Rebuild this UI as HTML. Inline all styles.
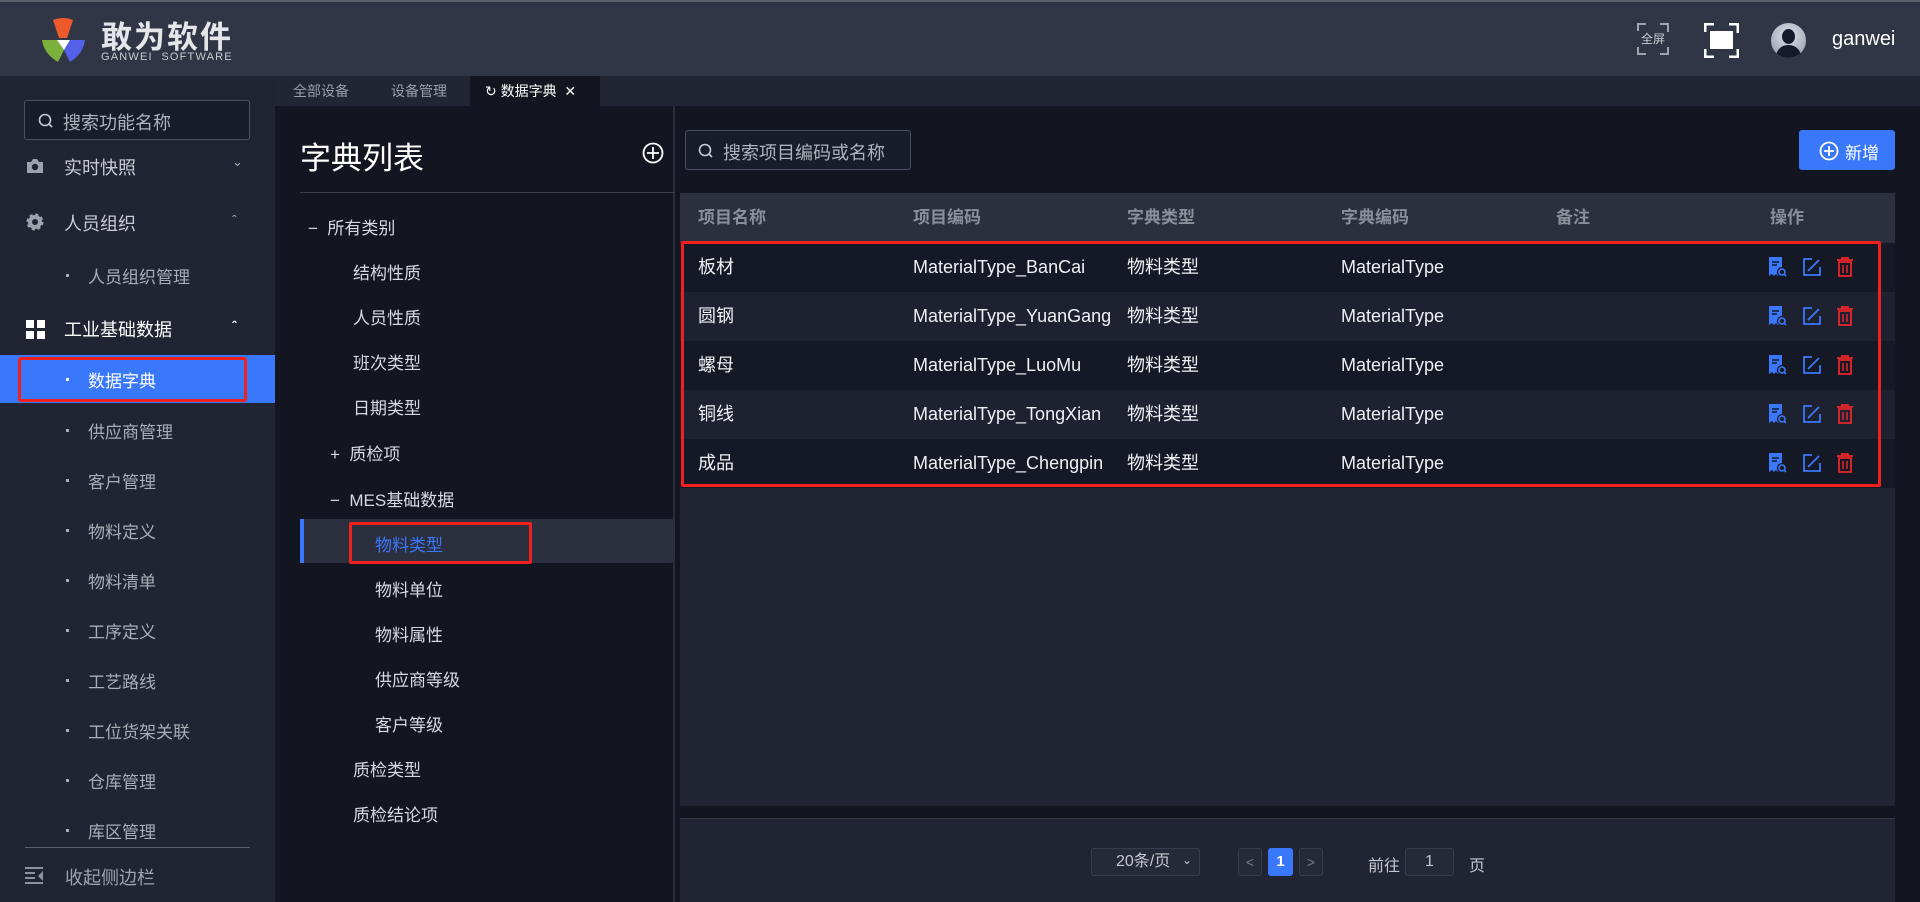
<!DOCTYPE html>
<html><head><meta charset="utf-8"><style>
*{margin:0;padding:0;box-sizing:border-box}
body{width:1920px;height:902px;overflow:hidden;background:#131620;font-family:"Liberation Sans","Noto Sans CJK SC",sans-serif;color:#e6e8ee;position:relative}
.a{position:absolute}
.hdr{left:0;top:0;width:1920px;height:76px;background:#313646;border-top:2px solid #5a5f6b}
.side{left:0;top:76px;width:275px;height:826px;background:#212533}
.mi{position:absolute;left:0;width:275px;font-size:18px;color:#c8cbd2}
.sub{left:88px;font-size:17px;color:#a9adb6}
.dot{position:absolute;left:66px;width:3px;height:3px;background:#a9adb6}
.tabs{left:275px;top:76px;width:1645px;height:30px;background:#222634}
.tab{position:absolute;top:0;height:30px;line-height:30px;font-size:14px;color:#9a9ea8}
.mid{left:275px;top:106px;width:400px;height:796px;background:#131620;border-right:2px solid #2a2e3b}
.tr{position:absolute;font-size:17px;color:#d6d9e0}
.right{left:675px;top:106px;width:1245px;height:796px;background:#131620}
.th{position:absolute;top:0;font-size:17px;font-weight:bold;color:#8a8f99;line-height:50px}
.row{position:absolute;left:0;width:1215px;height:49px;font-size:18px;line-height:49px;color:#eef0f4}
.row span{position:absolute;top:0}
</style></head><body>
<div class="a hdr">
 <svg class="a" style="left:40px;top:16px" width="46" height="46" viewBox="0 0 46 46"><path d="M13 2q10-4 20 0l-6 18h-8z" fill="#ef5a2c"/><path d="M2 22h15l7 10-6 12q-14-8-16-22z" fill="#7bb03b"/><path d="M30 22h15q-2 14-15 22l-6-12z" fill="#5560e8"/><path d="M17 22h13l-6 10z" fill="#fff"/></svg>
 <div class="a" style="left:101px;top:10px;font-size:31px;font-weight:bold;color:#e4e6ea;letter-spacing:2px">敢为软件</div>
 <div class="a" style="left:101px;top:49px;font-size:11px;color:#c8cad0;letter-spacing:1.2px">GANWEI&nbsp; SOFTWARE</div>
 <div class="a" style="left:1637px;top:21px;width:32px;height:32px;font-size:12px;line-height:32px;text-align:center;color:#c7cad2">全屏</div>
 <svg class="a" style="left:1637px;top:21px" width="32" height="32"><path d="M1 8V1h8M23 1h8v8M31 24v7h-8M9 31H1v-7" stroke="#9ea3ae" stroke-width="2" fill="none"/></svg>
 <svg class="a" style="left:1704px;top:21px" width="35" height="35"><path d="M1 9V1h9M25 1h9v9M34 26v8h-9M10 34H1v-8" stroke="#fff" stroke-width="3" fill="none"/><rect x="6" y="8" width="23" height="18" fill="#fff"/></svg>
 <div class="a" style="left:1771px;top:21px;width:35px;height:35px;border-radius:50%;background:radial-gradient(circle at 50% 35%,#dfe3ea,#8a93a6);overflow:hidden"><div class="a" style="left:11px;top:6px;width:13px;height:15px;border-radius:50%;background:#141a2c"></div><div class="a" style="left:5px;top:22px;width:25px;height:16px;border-radius:12px 12px 0 0;background:#141a2c"></div></div>
 <div class="a" style="left:1832px;top:26px;font-size:20px;color:#fff">ganwei</div>
</div>
<div class="a side">
 <div class="a" style="left:24px;top:24px;width:226px;height:40px;border:1px solid #4a5062;border-radius:3px;background:#191d29"></div>
 <svg class="a" style="left:38px;top:37px" width="16" height="16"><circle cx="7" cy="7" r="5.5" stroke="#c8cbd2" stroke-width="1.6" fill="none"/><path d="M11 11l3 3" stroke="#c8cbd2" stroke-width="1.6"/></svg>
 <div class="a" style="left:63px;top:33px;font-size:18px;color:#aeb2bb">搜索功能名称</div>
 <div class="mi" style="top:78px"><svg class="a" style="left:26px;top:4px" width="18" height="16"><path d="M1 4h4l2-3h4l2 3h4v11H1z" fill="#9ea2ac"/><circle cx="9" cy="9" r="3.2" fill="#212533"/></svg><span class="a" style="left:64px">实时快照</span><span class="a" style="left:232px;font-size:13px;color:#aaa">&#8964;</span></div>
 <div class="mi" style="top:134px"><svg class="a" style="left:26px;top:3px" width="18" height="18"><circle cx="9" cy="9" r="7" fill="#9ea2ac" stroke="#9ea2ac" stroke-width="3" stroke-dasharray="3 2.5"/><circle cx="9" cy="9" r="3" fill="#212533"/></svg><span class="a" style="left:64px">人员组织</span><span class="a" style="left:232px;top:2px;font-size:14px;color:#aaa">&#710;</span></div>
 <div class="dot" style="top:198px"></div><div class="mi sub" style="top:187px">人员组织管理</div>
 <div class="mi" style="top:240px;color:#fff"><svg class="a" style="left:26px;top:4px" width="19" height="19"><rect x="0" y="0" width="8" height="8" fill="#fff"/><rect x="11" y="0" width="8" height="8" fill="#fff"/><rect x="0" y="11" width="8" height="8" fill="#fff"/><rect x="11" y="11" width="8" height="8" fill="#fff"/></svg><span class="a" style="left:64px">工业基础数据</span><span class="a" style="left:232px;top:2px;font-size:14px;font-weight:bold">&#710;</span></div>
 <div class="a" style="left:0;top:279px;width:275px;height:48px;background:#3a78fb"></div>
 <div class="a" style="left:18px;top:281px;width:229px;height:45px;border:3px solid #f0211c;border-radius:3px"></div>
 <div class="dot" style="top:302px;background:#fff"></div><div class="mi sub" style="top:291px;color:#fff">数据字典</div>
 <div class="dot" style="top:353px"></div><div class="mi sub" style="top:342px">供应商管理</div>
 <div class="dot" style="top:403px"></div><div class="mi sub" style="top:392px">客户管理</div>
 <div class="dot" style="top:453px"></div><div class="mi sub" style="top:442px">物料定义</div>
 <div class="dot" style="top:503px"></div><div class="mi sub" style="top:492px">物料清单</div>
 <div class="dot" style="top:553px"></div><div class="mi sub" style="top:542px">工序定义</div>
 <div class="dot" style="top:603px"></div><div class="mi sub" style="top:592px">工艺路线</div>
 <div class="dot" style="top:653px"></div><div class="mi sub" style="top:642px">工位货架关联</div>
 <div class="dot" style="top:703px"></div><div class="mi sub" style="top:692px">仓库管理</div>
 <div class="dot" style="top:753px"></div><div class="mi sub" style="top:742px">库区管理</div>
 <div class="a" style="left:25px;top:771px;width:225px;height:1px;background:#5a6070"></div>
 <svg class="a" style="left:25px;top:791px" width="19" height="18"><path d="M0 1h18M0 6h10M0 11h10M0 16h18" stroke="#8d93a0" stroke-width="2"/><path d="M18 4v10l-5-5z" fill="#8d93a0"/></svg>
 <div class="mi" style="top:788px;left:65px;color:#9ea2ac;font-size:18px">收起侧边栏</div>
</div>
<div class="a tabs">
 <div class="tab" style="left:18px">全部设备</div>
 <div class="tab" style="left:116px">设备管理</div>
 <div class="a" style="left:195px;top:0;width:130px;height:30px;background:#131620"></div>
 <div class="tab" style="left:210px;color:#fff">&#8635; 数据字典 &nbsp;✕</div>
</div>
<div class="a mid">
 <div class="a" style="left:25px;top:27px;font-size:31px;color:#fff">字典列表</div>
 <svg class="a" style="left:367px;top:36px" width="22" height="22"><circle cx="11" cy="11" r="9.5" stroke="#fff" stroke-width="1.8" fill="none"/><path d="M11 5v12M5 11h12" stroke="#fff" stroke-width="1.8"/></svg>
 <div class="a" style="left:25px;top:86px;width:375px;height:1px;background:#3a3f4c"></div>
 <div class="tr" style="left:33px;top:108px">−&nbsp; 所有类别</div>
 <div class="tr" style="left:78px;top:153px">结构性质</div>
 <div class="tr" style="left:78px;top:198px">人员性质</div>
 <div class="tr" style="left:78px;top:243px">班次类型</div>
 <div class="tr" style="left:78px;top:288px">日期类型</div>
 <div class="tr" style="left:55px;top:334px">+&nbsp; 质检项</div>
 <div class="tr" style="left:55px;top:380px">−&nbsp; MES基础数据</div>
 <div class="a" style="left:25px;top:413px;width:375px;height:44px;background:#2b2f3e;border-radius:0 4px 4px 0"></div>
 <div class="a" style="left:25px;top:413px;width:4px;height:44px;background:#3a78fb"></div>
 <div class="a" style="left:74px;top:416px;width:183px;height:42px;border:3px solid #f0211c;border-radius:2px"></div>
 <div class="tr" style="left:100px;top:425px;color:#3a78fb">物料类型</div>
 <div class="tr" style="left:100px;top:470px">物料单位</div>
 <div class="tr" style="left:100px;top:515px">物料属性</div>
 <div class="tr" style="left:100px;top:560px">供应商等级</div>
 <div class="tr" style="left:100px;top:605px">客户等级</div>
 <div class="tr" style="left:78px;top:650px">质检类型</div>
 <div class="tr" style="left:78px;top:695px">质检结论项</div>
</div>
<div class="a right">
 <div class="a" style="left:10px;top:24px;width:226px;height:40px;border:1px solid #4a5062;border-radius:3px;background:#191d29"></div>
 <svg class="a" style="left:23px;top:37px" width="16" height="16"><circle cx="7" cy="7" r="5.5" stroke="#c8cbd2" stroke-width="1.6" fill="none"/><path d="M11 11l3 3" stroke="#c8cbd2" stroke-width="1.6"/></svg>
 <div class="a" style="left:48px;top:33px;font-size:18px;color:#aeb2bb;width:178px;overflow:hidden;white-space:nowrap">搜索项目编码或名称</div>
 <div class="a" style="left:1124px;top:24px;width:96px;height:40px;background:#3a78fb;border-radius:3px"></div>
 <svg class="a" style="left:1144px;top:35px" width="20" height="20"><circle cx="10" cy="10" r="8.5" stroke="#fff" stroke-width="1.8" fill="none"/><path d="M10 5v10M5 10h10" stroke="#fff" stroke-width="1.8"/></svg>
 <div class="a" style="left:1170px;top:33px;font-size:17px;color:#fff">新增</div>
 <div class="a" style="left:5px;top:87px;width:1215px;height:613px;background:#202433"></div>
 <div class="a" style="left:5px;top:87px;width:1215px;height:50px;background:#2b2f3e">
  <div class="th" style="left:18px">项目名称</div><div class="th" style="left:233px">项目编码</div><div class="th" style="left:447px">字典类型</div><div class="th" style="left:661px">字典编码</div><div class="th" style="left:876px">备注</div><div class="th" style="left:1090px">操作</div>
 </div>
 <div class="a" style="left:5px;top:137px;width:1215px;height:245px">
  <div class="row" style="top:0;background:#151925"><span style="left:18px">板材</span><span style="left:233px">MaterialType_BanCai</span><span style="left:447px">物料类型</span><span style="left:661px">MaterialType</span></div>
  <div class="row" style="top:49px;background:#1d2130"><span style="left:18px">圆钢</span><span style="left:233px;width:210px;overflow:hidden;white-space:nowrap">MaterialType_YuanGang</span><span style="left:447px">物料类型</span><span style="left:661px">MaterialType</span></div>
  <div class="row" style="top:98px;background:#151925"><span style="left:18px">螺母</span><span style="left:233px">MaterialType_LuoMu</span><span style="left:447px">物料类型</span><span style="left:661px">MaterialType</span></div>
  <div class="row" style="top:147px;background:#1d2130"><span style="left:18px">铜线</span><span style="left:233px">MaterialType_TongXian</span><span style="left:447px">物料类型</span><span style="left:661px">MaterialType</span></div>
  <div class="row" style="top:196px;background:#151925"><span style="left:18px">成品</span><span style="left:233px;width:210px;overflow:hidden;white-space:nowrap">MaterialType_Chengpin</span><span style="left:447px">物料类型</span><span style="left:661px">MaterialType</span></div>
 </div>
 <div class="a" style="left:6px;top:135px;width:1200px;height:246px;border:3px solid #f0211c;border-radius:2px"></div>
 <svg class="a" style="left:1092px;top:150px" width="100" height="240">
  <defs><g id="ic"><path d="M2 1h13v10a5 5 0 0 0-3 9l-1 0-2-2-2 2-2-2-3 2z" fill="#3a78fb"/><path d="M5 6h7M5 9h5" stroke="#151925" stroke-width="1.5"/><circle cx="15" cy="16" r="3" stroke="#3a78fb" stroke-width="1.6" fill="none"/><path d="M17 18l2 2" stroke="#3a78fb" stroke-width="1.6"/>
  <path d="M45 3h-8v16h16v-8M41 15l11-11" stroke="#3a78fb" stroke-width="1.8" fill="none"/>
  <path d="M70 4h16M75 4V2h6v2M72 6h12v14H72z" stroke="#e8262a" stroke-width="1.8" fill="none"/><path d="M76 9v8M80 9v8" stroke="#e8262a" stroke-width="1.5"/></g></defs>
  <use href="#ic" y="0"/><use href="#ic" y="49"/><use href="#ic" y="98"/><use href="#ic" y="147"/><use href="#ic" y="196"/>
 </svg>
 <div class="a" style="left:5px;top:712px;width:1215px;height:1px;background:#343846"></div>
 <div class="a" style="left:5px;top:713px;width:1215px;height:83px;background:#202433"></div>
 <div class="a" style="left:416px;top:742px;width:109px;height:28px;border:1px solid #383d4c;border-radius:3px;background:#262a38;font-size:16px;line-height:26px;color:#c4c7ce;padding-left:24px">20条/页<span class="a" style="left:90px;top:-2px;font-size:12px">&#8964;</span></div>
 <div class="a" style="left:563px;top:742px;width:24px;height:28px;border:1px solid #383d4c;border-radius:3px;background:#262a38;color:#777c88;text-align:center;line-height:26px;font-size:14px">&lt;</div>
 <div class="a" style="left:593px;top:742px;width:25px;height:28px;border-radius:3px;background:#3a78fb;color:#fff;text-align:center;line-height:28px;font-size:15px;font-weight:bold">1</div>
 <div class="a" style="left:624px;top:742px;width:24px;height:28px;border:1px solid #383d4c;border-radius:3px;background:#262a38;color:#777c88;text-align:center;line-height:26px;font-size:14px">&gt;</div>
 <div class="a" style="left:693px;top:746px;font-size:16px;color:#c4c7ce">前往</div>
 <div class="a" style="left:730px;top:742px;width:49px;height:28px;border:1px solid #383d4c;border-radius:3px;background:#262a38;color:#c4c7ce;text-align:center;line-height:26px;font-size:16px">1</div>
 <div class="a" style="left:794px;top:746px;font-size:16px;color:#c4c7ce">页</div>
</div>
</body></html>
